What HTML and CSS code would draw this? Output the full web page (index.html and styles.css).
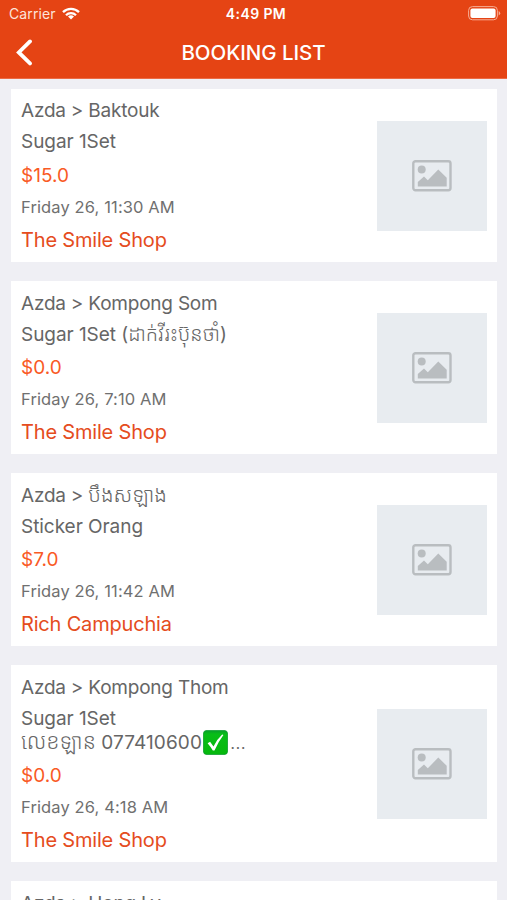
FILE: index.html
```html
<!DOCTYPE html>
<html lang="en">
<head>
<meta charset="utf-8">
<title>Booking List</title>
<link rel="stylesheet" href="styles.css">
</head>
<body>
<svg class="defs" width="0" height="0" aria-hidden="true">
  <symbol id="photo" viewBox="0 0 40 32">
    <rect x="1.3" y="1.3" width="37.2" height="29" rx="2.2" fill="none" stroke="currentColor" stroke-width="2.4"/>
    <circle cx="9.7" cy="9.6" r="4" fill="currentColor"/>
    <path d="M5.8 26.4V22l6.2-5.6 3.8 3.8L26.3 9.6l8.4 8.1v8.7z" fill="currentColor"/>
  </symbol>
</svg>
<header class="header">
  <div class="status">
    <div class="carrier"><span>Carrier</span>
      <svg class="wifi" viewBox="0 0 18 13"><g fill="none" stroke="#fff" stroke-width="2.3"><path d="M1 5.1a11.3 11.3 0 0 1 16 0"/><path d="M4 8.2a7 7 0 0 1 10 0"/></g><path d="M9 12.6l-3-3a4.3 4.3 0 0 1 6 0z" fill="#fff"/></svg>
    </div>
    <div class="clock">4:49 PM</div>
    <svg class="battery" viewBox="0 0 33 15"><rect x=".6" y=".6" width="28.8" height="13.2" rx="3.8" fill="none" stroke="#f7ad94" stroke-width="1"/><rect x="2.4" y="2.4" width="25.2" height="9.6" rx="2" fill="#fff"/><path d="M30.7 5v4.4q1.5-.7 1.5-2.2T30.7 5z" fill="#f7ad94"/></svg>
  </div>
  <div class="nav">
    <svg class="back" viewBox="0 0 17 27"><path d="M14 2.4L2.8 13.4L14 24.4" fill="none" stroke="#fff" stroke-width="3.8" stroke-linecap="round" stroke-linejoin="miter"/></svg>
    <h1>BOOKING LIST</h1>
  </div>
</header>
<main class="list">
  <article class="card">
    <div class="info">
      <div class="route">Azda &gt; Baktouk</div>
      <div class="item">Sugar 1Set</div>
      <div class="price">$15.0</div>
      <div class="date">Friday 26, 11:30 AM</div>
      <div class="shop">The Smile Shop</div>
    </div>
    <div class="thumb"><svg><use href="#photo"/></svg></div>
  </article>
  <article class="card">
    <div class="info">
      <div class="route">Azda &gt; Kompong Som</div>
      <div class="item">Sugar 1Set (<span class="khmer" lang="km">ដាក់វីរះប៊ុនថាំ</span>)</div>
      <div class="price">$0.0</div>
      <div class="date">Friday 26, 7:10 AM</div>
      <div class="shop">The Smile Shop</div>
    </div>
    <div class="thumb"><svg><use href="#photo"/></svg></div>
  </article>
  <article class="card">
    <div class="info">
      <div class="route">Azda &gt; <span class="khmer large" lang="km">បឹងសឡាង</span></div>
      <div class="item">Sticker Orang</div>
      <div class="price">$7.0</div>
      <div class="date">Friday 26, 11:42 AM</div>
      <div class="shop">Rich Campuchia</div>
    </div>
    <div class="thumb"><svg><use href="#photo"/></svg></div>
  </article>
  <article class="card">
    <div class="info">
      <div class="route">Azda &gt; Kompong Thom</div>
      <div class="item">Sugar 1Set<br><span class="khmer larger" lang="km">លេខឡាន</span> <span class="phone">077410600</span><svg class="check" viewBox="0 0 25 25"><defs><linearGradient id="green" x2="0" y2="1"><stop stop-color="#079d2c"/><stop offset=".15" stop-color="#08bd18"/><stop offset="1" stop-color="#05b80c"/></linearGradient></defs><rect x=".4" y=".4" width="24.2" height="24.2" rx="3.5" fill="url(#green)" stroke="#079b2b" stroke-width=".8"/><path d="M4.6 13.2l2.5-1.4 3.4 4.6Q14 9 19.2 4.4l1.2.5Q15 12 11.5 20.6H9.8Q7.5 16.5 4.6 13.2z" fill="#fff"/></svg><span class="more">...</span></div>
      <div class="price">$0.0</div>
      <div class="date">Friday 26, 4:18 AM</div>
      <div class="shop">The Smile Shop</div>
    </div>
    <div class="thumb"><svg><use href="#photo"/></svg></div>
  </article>
  <article class="card">
    <div class="info">
      <div class="route">Azda &gt; Hong Ly</div>
    </div>
  </article>
</main>
</body>
</html>
```
FILE: styles.css
```css
* { box-sizing: border-box; }
html, body { height: 900px; overflow: hidden; }
body {
  margin: 0;
  background: #efeff4;
  font-family: Inter, "Noto Sans Khmer", "Khmer OS", "Liberation Sans", sans-serif;
  color: #666;
}
.defs { display: block; }
svg { flex: none; }
.header { height: 79px; background: #e54414; color: #fff; border-bottom: 1px solid #eb6b45; }
.status {
  display: grid;
  grid-template-columns: 1fr auto 1fr;
  align-items: center;
  height: 27px;
  padding: 0 6px 0 9px;
}
.carrier { display: flex; align-items: center; gap: 6px; font-size: 14px; letter-spacing: .1px; color: #fde3da; }
.wifi { width: 18px; height: 13px; }
.clock { padding-left: 2px; font-size: 14px; font-weight: 600; letter-spacing: .4px; }
.battery { width: 33px; height: 15px; justify-self: end; }
.nav { display: grid; grid-template-columns: 40px 1fr 40px; align-items: center; height: 51px; }
.back { width: 17px; height: 27px; margin-left: 16px; }
h1 { margin: 0; text-align: center; font-size: 20.5px; font-weight: 500; letter-spacing: -.05px; }
.list { display: flex; flex-direction: column; gap: 19.2px; padding: 9.6px 10px 0 11px; }
.card {
  display: flex;
  justify-content: space-between;
  align-items: center;
  padding: 10.9px 9.7px 10.1px 10px;
  background: #fff;
}
.info { white-space: nowrap; }
.route, .item { font-size: 19px; line-height: 23.5px; letter-spacing: -.05px; }
.route { letter-spacing: -.22px; }
.item { margin-top: 7.5px; }
.khmer { line-height: 0; font-size: 20px; font-weight: 300; letter-spacing: 0; }
.khmer.large { font-size: 20.6px; }
.khmer.larger { font-size: 21.6px; }
.phone { letter-spacing: .1px; }
.check { width: 25px; height: 25px; margin: -4px 0 -5px 1px; vertical-align: -5px; position: relative; top: -4px; }
.more { margin-left: 2px; font-weight: 300; }
.price { margin-top: 9.6px; font-size: 19px; line-height: 24px; color: #f95a25; }
.date { margin-top: 9.1px; font-size: 16.5px; line-height: 20px; letter-spacing: .12px; color: #707070; }
.shop { margin-top: 10.9px; font-size: 20px; line-height: 24px; letter-spacing: -.18px; color: #e54c20; }
.thumb { display: grid; place-items: center; width: 110px; height: 110px; background: #e8ecf0; color: #b9bdc0; }
.thumb svg { width: 40px; height: 32px; }
```
